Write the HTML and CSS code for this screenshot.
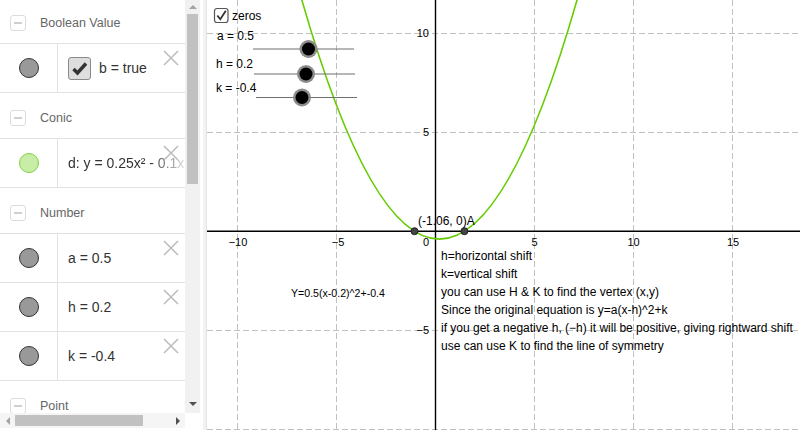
FILE: index.html
```html
<!DOCTYPE html>
<html>
<head>
<meta charset="utf-8">
<link rel="stylesheet" href="styles.css">
</head>
<body>
<div class="app">
  <div class="algebra">
    <div class="av-view">
      <div class="list">
        <div class="header"><span class="toggle"></span><span>Boolean Value</span></div>
        <div class="item">
          <div class="marble-cell"><span class="marble"></span></div>
          <div class="content">
            <span class="bool"><svg width="21" height="21" viewBox="0 0 21 21"><path class="tick" d="M4.5 11 L8.5 15 L17 5.5"/></svg></span>
            <span>b = true</span>
          </div>
          <svg class="close" viewBox="0 0 16 16"><path d="M1 1 L15 15 M15 1 L1 15"/></svg>
        </div>
        <div class="header"><span class="toggle"></span><span>Conic</span></div>
        <div class="item">
          <div class="marble-cell"><span class="marble green"></span></div>
          <div class="content fade"><span>d: y = 0.25x² - 0.1x + 0.01 - 0.4</span></div>
          <svg class="close" viewBox="0 0 16 16"><path d="M1 1 L15 15 M15 1 L1 15"/></svg>
        </div>
        <div class="header"><span class="toggle"></span><span>Number</span></div>
        <div class="item">
          <div class="marble-cell"><span class="marble"></span></div>
          <div class="content"><span>a = 0.5</span></div>
          <svg class="close" viewBox="0 0 16 16"><path d="M1 1 L15 15 M15 1 L1 15"/></svg>
        </div>
        <div class="item">
          <div class="marble-cell"><span class="marble"></span></div>
          <div class="content"><span>h = 0.2</span></div>
          <svg class="close" viewBox="0 0 16 16"><path d="M1 1 L15 15 M15 1 L1 15"/></svg>
        </div>
        <div class="item">
          <div class="marble-cell"><span class="marble"></span></div>
          <div class="content"><span>k = -0.4</span></div>
          <svg class="close" viewBox="0 0 16 16"><path d="M1 1 L15 15 M15 1 L1 15"/></svg>
        </div>
        <div class="header"><span class="toggle"></span><span>Point</span></div>
      </div>
    </div>
    <div class="vscroll">
      <div class="arrow-box up-box"><span class="tri-up"></span></div>
      <div class="vthumb"></div>
      <div class="spacer"></div>
      <div class="arrow-box down-box"><span class="tri-down"></span></div>
    </div>
    <div class="hscroll">
      <div class="harrow"><span class="tri-left"></span></div>
      <div class="hthumb"></div>
      <div class="spacer"></div>
      <div class="harrow"><span class="tri-right"></span></div>
    </div>
    <div class="corner"></div>
  </div>
  <div class="divider"></div>
  <div class="graphics">
    <svg class="plot" width="593" height="430" viewBox="207 0 593 430">
      <g class="grid">
        <line x1="237.5" y1="0" x2="237.5" y2="430"/>
        <line x1="336.5" y1="0" x2="336.5" y2="430"/>
        <line x1="534.5" y1="0" x2="534.5" y2="430"/>
        <line x1="633.5" y1="0" x2="633.5" y2="430"/>
        <line x1="732.5" y1="0" x2="732.5" y2="430"/>
        <line x1="207" y1="33.5" x2="800" y2="33.5"/>
        <line x1="207" y1="132.5" x2="800" y2="132.5"/>
        <line x1="207" y1="330.5" x2="800" y2="330.5"/>
        <line x1="207" y1="429.5" x2="800" y2="429.5"/>
      </g>
      <g class="axis">
        <line x1="207" y1="231.2" x2="800" y2="231.2"/>
        <line x1="435.5" y1="0" x2="435.5" y2="430"/>
      </g>
      <g class="num">
        <text x="238" y="246" class="mid">−10</text>
        <text x="338" y="246" class="mid">−5</text>
        <text x="426" y="246" class="mid">0</text>
        <text x="534.5" y="246" class="mid">5</text>
        <text x="633.5" y="246" class="mid">10</text>
        <text x="733" y="246" class="mid">15</text>
        <text x="429" y="37" class="end">10</text>
        <text x="429" y="136" class="end">5</text>
        <text x="429" y="334" class="end">−5</text>
      </g>
      <path class="curve" d="M277.1,-93.7 Q439.46,572 601.8,-93.7"/>
      <circle class="pt" cx="414.5" cy="231.2" r="3.5"/>
      <circle class="pt" cx="464.4" cy="231.2" r="3.5"/>
      <text class="lbl" x="418" y="225">(-1.06, 0)A</text>

      <rect class="cb" x="214.5" y="8.5" width="13.5" height="14" rx="2.5"/>
      <path class="cbtick" d="M217.3 15.5 L220.3 19.3 L225.8 10.8"/>
      <text class="lbl" x="232" y="19.5">zeros</text>

      <text class="lbl" x="217" y="39.5">a = 0.5</text>
      <line class="track" x1="253" y1="49" x2="354" y2="49"/>
      <circle class="halo" cx="308.5" cy="49" r="9"/>
      <circle class="knob" cx="308.5" cy="49" r="6.5"/>

      <text class="lbl" x="216" y="67.5">h = 0.2</text>
      <line class="track" x1="254" y1="74" x2="355" y2="74"/>
      <circle class="halo" cx="306" cy="74" r="9"/>
      <circle class="knob" cx="306" cy="74" r="6.5"/>

      <text class="lbl" x="216" y="91.5">k = -0.4</text>
      <line class="track" x1="256" y1="97.5" x2="357" y2="97.5"/>
      <circle class="halo" cx="302" cy="97.5" r="9"/>
      <circle class="knob" cx="302" cy="97.5" r="6.5"/>

      <text class="lbl small" x="291" y="297">Y=0.5(x-0.2)^2+-0.4</text>

      <g class="lbl">
        <text x="441" y="260">h=horizontal shift</text>
        <text x="441" y="278">k=vertical shift</text>
        <text x="441" y="296">you can use H &amp; K to find the vertex (x,y)</text>
        <text x="441" y="314">Since the original equation is y=a(x-h)^2+k</text>
        <text x="441" y="332">if you get a negative h, (−h) it will be positive, giving rightward shift</text>
        <text x="441" y="350">use can use K to find the line of symmetry</text>
      </g>
    </svg>
  </div>
</div>
</body>
</html>
```

FILE: styles.css
```css
html, body {
  margin: 0;
  height: 100%;
  overflow: hidden;
  background: #fff;
}
body {
  font-family: "Liberation Sans", Arial, sans-serif;
}
.app {
  display: flex;
  width: 800px;
  height: 430px;
}
.algebra {
  display: grid;
  grid-template-columns: 185px 15px;
  grid-template-rows: 413px 17px;
  width: 200px;
  flex: none;
}
.av-view {
  overflow: hidden;
  position: relative;
}
.list {
  margin-top: -2px;
}
.header {
  height: 46px;
  box-sizing: border-box;
  border-bottom: 1px solid #e2e2e2;
  display: flex;
  align-items: center;
  padding: 4px 0 0 10px;
  gap: 14px;
  color: #666;
  font-size: 12.5px;
}
.toggle {
  width: 16px;
  height: 16px;
  box-sizing: border-box;
  border: 1px solid #dcdcdc;
  border-radius: 3px;
  display: flex;
  align-items: center;
  justify-content: center;
}
.toggle::before {
  content: "";
  width: 8px;
  height: 2px;
  background: #cfcfcf;
}
.item {
  height: 49px;
  box-sizing: border-box;
  border-bottom: 1px solid #e2e2e2;
  display: flex;
  position: relative;
}
.marble-cell {
  width: 58px;
  flex: none;
  box-sizing: border-box;
  border-right: 1px solid #e2e2e2;
  display: flex;
  align-items: center;
  justify-content: center;
}
.marble {
  width: 20px;
  height: 20px;
  box-sizing: border-box;
  border-radius: 50%;
  background: #999;
  border: 1px solid #333;
}
.marble.green {
  background: #c7eda6;
  border-color: #80d143;
}
.content {
  flex: 1;
  min-width: 0;
  display: flex;
  align-items: center;
  padding-left: 10px;
  gap: 8px;
  font-size: 14px;
  color: #333;
  white-space: nowrap;
  overflow: hidden;
}
.content.fade {
  -webkit-mask-image: linear-gradient(to right, #000 72%, rgba(0,0,0,0.15) 100%);
  mask-image: linear-gradient(to right, #000 72%, rgba(0,0,0,0.15) 100%);
}
.bool {
  width: 23px;
  height: 23px;
  box-sizing: border-box;
  border: 1px solid #8a8a8a;
  border-radius: 3px;
  background: #dedede;
  display: flex;
  align-items: center;
  justify-content: center;
  flex: none;
}
.bool svg {
  display: block;
}
.tick {
  fill: none;
  stroke: #333;
  stroke-width: 3.4;
}
.close {
  position: absolute;
  top: 6px;
  right: 6px;
  width: 16px;
  height: 16px;
}
.close path {
  stroke: #bcbcbc;
  stroke-width: 1.5;
  fill: none;
}
.vscroll {
  background: #f1f1f1;
  display: flex;
  flex-direction: column;
}
.arrow-box {
  display: flex;
  align-items: center;
  justify-content: center;
}
.up-box {
  height: 14px;
}
.down-box {
  height: 18px;
}
.vthumb {
  height: 170px;
  width: 11px;
  margin-left: 2px;
  background: #c1c1c1;
}
.spacer {
  flex: 1;
}
.tri-up {
  width: 0;
  height: 0;
  border-left: 4px solid transparent;
  border-right: 4px solid transparent;
  border-bottom: 4px solid #a3a3a3;
}
.tri-down {
  width: 0;
  height: 0;
  border-left: 4px solid transparent;
  border-right: 4px solid transparent;
  border-top: 4px solid #505050;
}
.hscroll {
  display: flex;
  align-items: center;
  background: #f5f5f5;
  height: 15px;
  margin-bottom: 2px;
}
.harrow {
  width: 15px;
  height: 15px;
  display: flex;
  align-items: center;
  justify-content: center;
  flex: none;
}
.hthumb {
  width: 128px;
  height: 11px;
  background: #c1c1c1;
}
.tri-left {
  width: 0;
  height: 0;
  border-top: 4px solid transparent;
  border-bottom: 4px solid transparent;
  border-right: 4px solid #a3a3a3;
}
.tri-right {
  width: 0;
  height: 0;
  border-top: 4px solid transparent;
  border-bottom: 4px solid transparent;
  border-left: 4px solid #505050;
}
.corner {
  background: #fff;
}
.divider {
  width: 7px;
  flex: none;
  box-sizing: border-box;
  background: #f2f2f2;
  border-left: 3px solid #fff;
  border-right: 1px solid #e4e4e4;
}
.graphics {
  flex: 1;
  overflow: hidden;
}
.plot {
  display: block;
}
.grid line {
  stroke: #c0c0c0;
  stroke-width: 1;
  stroke-dasharray: 6 3;
}
.axis line {
  stroke: #000;
  stroke-width: 1.4;
}
.num {
  font-family: "Liberation Sans", Arial, sans-serif;
  font-size: 11px;
  fill: #000;
}
.mid {
  text-anchor: middle;
}
.end {
  text-anchor: end;
}
.curve {
  fill: none;
  stroke: #66cc00;
  stroke-width: 1.6;
}
.pt {
  fill: #444;
  stroke: #222;
  stroke-width: 1;
}
.lbl {
  font-family: "Liberation Sans", Arial, sans-serif;
  font-size: 12px;
  fill: #000;
}
.lbl.small {
  font-size: 10.6px;
}
.cb {
  fill: #fff;
  stroke: #555;
  stroke-width: 1.2;
}
.cbtick {
  fill: none;
  stroke: #333;
  stroke-width: 1.8;
}
.track {
  stroke: #6e6e6e;
  stroke-width: 1;
}
.halo {
  fill: #8c8c8c;
}
.knob {
  fill: #000;
}
```
